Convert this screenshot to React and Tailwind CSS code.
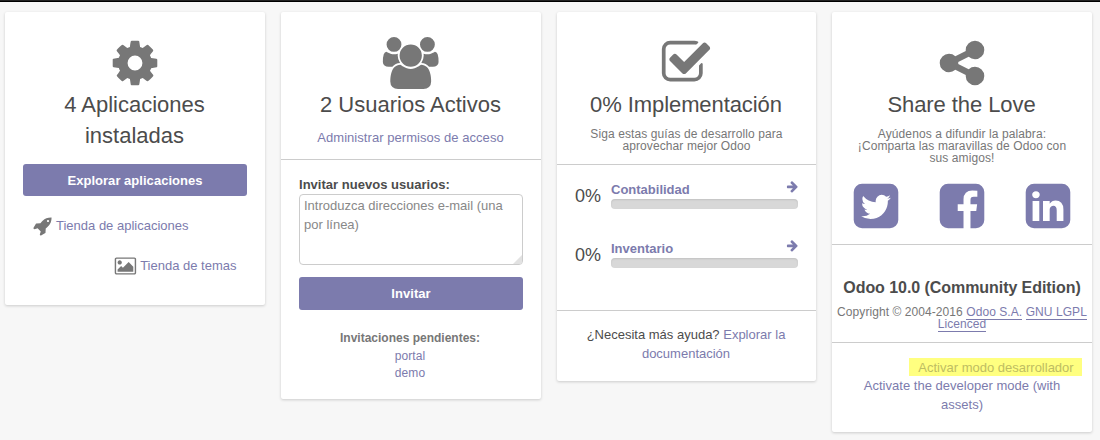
const ICONS = {
  cog: "M1152 896q0-106-75-181t-181-75-181 75-75 181 75 181 181 75 181-75 75-181zm512-109v222q0 12-8 23t-20 13l-185 28q-19 54-39 91 35 50 107 138 10 12 10 25t-9 23q-27 37-99 108t-94 71q-12 0-26-9l-138-108q-44 23-91 38-16 136-29 186-7 28-36 28h-222q-14 0-24.5-8.5t-11.5-21.5l-28-184q-49-16-90-37l-141 107q-10 9-25 9-14 0-25-11-126-114-165-168-7-10-7-23 0-12 8-23 15-21 51-66.5t54-70.5q-27-50-41-99l-183-27q-13-2-21-12.5t-8-23.5v-222q0-12 8-23t19-13l186-28q14-46 39-92-40-57-107-138-10-12-10-24 0-10 9-23 26-36 98.5-107.5t94.5-71.5q13 0 26 10l138 107q44-23 91-38 16-136 29-186 7-28 36-28h222q14 0 24.5 8.5t11.5 21.5l28 184q49 16 90 37l142-107q9-9 24-9 13 0 25 10 129 119 165 170 7 8 7 22 0 12-8 23-15 21-51 66.5t-54 70.5q26 50 41 98l183 28q13 2 21 12.5t8 23.5z",
  users: "M657 896q-162 5-265 128h-134q-82 0-138-40.5t-56-118.5q0-353 124-353 6 0 43.5 21t97.5 42.5 119 21.5q67 0 133-23-5 37-5 66 0 139 81 256zm1071 637q0 120-73 189.5t-194 69.5h-874q-121 0-194-69.5t-73-189.5q0-53 3.5-103.5t14-109 26.5-108.5 43-97.5 62-81 85.5-53.5 111.5-20q10 0 43 21.5t73 48 107 48 135 21.5 135-21.5 107-48 73-48 43-21.5q61 0 111.5 20t85.5 53.5 62 81 43 97.5 26.5 108.5 14 109 3.5 103.5zm-1024-1277q0 106-75 181t-181 75-181-75-75-181 75-181 181-75 181 75 75 181zm704 384q0 159-112.5 271.5t-271.5 112.5-271.5-112.5-112.5-271.5 112.5-271.5 271.5-112.5 271.5 112.5 112.5 271.5zm576 225q0 78-56 118.5t-138 40.5h-134q-103-123-265-128 81-117 81-256 0-29-5-66 66 23 133 23 59 0 119-21.5t97.5-42.5 43.5-21q124 0 124 353zm-128-609q0 106-75 181t-181 75-181-75-75-181 75-181 181-75 181 75 75 181z",
  check: "M1472 930v318q0 119-84.5 203.5t-203.5 84.5h-832q-119 0-203.5-84.5t-84.5-203.5v-832q0-119 84.5-203.5t203.5-84.5h832q63 0 117 25 15 7 18 23 3 17-9 29l-49 49q-10 10-23 10-3 0-9-2-23-6-45-6h-832q-66 0-113 47t-47 113v832q0 66 47 113t113 47h832q66 0 113-47t47-113v-254q0-13 9-22l64-64q10-10 23-10 6 0 12 3 20 8 20 29zm231-489l-814 814q-24 24-57 24t-57-24l-430-430q-24-24-24-57t24-57l110-110q24-24 57-24t57 24l263 263 647-647q24-24 57-24t57 24l110 110q24 24 24 57t-24 57z",
  share: "M1344 1024q133 0 226.5 93.5t93.5 226.5-93.5 226.5-226.5 93.5-226.5-93.5-93.5-226.5q0-12 2-34l-360-180q-92 86-218 86-133 0-226.5-93.5t-93.5-226.5 93.5-226.5 226.5-93.5q126 0 218 86l360-180q-2-22-2-34 0-133 93.5-226.5t226.5-93.5 226.5 93.5 93.5 226.5-93.5 226.5-226.5 93.5q-126 0-218-86l-360 180q2 22 2 34t-2 34l360 180q92-86 218-86z",
  rocket: "M1440 448q0-40-28-68t-68-28-68 28-28 68 28 68 68 28 68-28 28-68zm224-288q0 249-75.5 430.5t-253.5 360.5q-81 80-195 176l-20 379q-2 16-16 26l-384 224q-7 4-16 4-12 0-23-9l-64-64q-13-14-8-32l85-276-281-281-276 85q-3 1-9 1-14 0-23-9l-64-64q-17-19-5-39l224-384q10-14 26-16l379-20q96-114 176-195 188-187 358-258t431-71q14 0 24 9.5t10 22.5z",
  picture: "M704 576q0 80-56 136t-136 56-136-56-56-136 56-136 136-56 136 56 56 136zm1024 384v448h-1408v-192l320-320 160 160 512-512zm96-704h-1600q-13 0-22.5 9.5t-9.5 22.5v1216q0 13 9.5 22.5t22.5 9.5h1600q13 0 22.5-9.5t9.5-22.5v-1216q0-13-9.5-22.5t-22.5-9.5zm160 32v1216q0 66-47 113t-113 47h-1600q-66 0-113-47t-47-113v-1216q0-66 47-113t113-47h1600q66 0 113 47t47 113z",
  arrow: "M1600 960q0 54-37 91l-651 651q-39 37-91 37-51 0-90-37l-75-75q-38-38-38-91t38-91l293-293h-704q-52 0-84.5-37.5t-32.5-90.5v-128q0-53 32.5-90.5t84.5-37.5h704l-293-294q-38-36-38-90t38-90l75-75q38-38 90-38 53 0 91 38l651 651q37 35 37 90z",
  twitter: "M1408 610q-56 25-121 34 68-40 93-117-65 38-134 51-61-66-153-66-87 0-148.5 61.5t-61.5 148.5q0 29 5 48-129-7-242-65t-192-155q-29 50-29 106 0 114 91 175-47-1-100-26v2q0 75 50 133.5t123 72.5q-29 8-51 8-13 0-39-4 21 63 74.5 104t121.5 42q-116 90-261 90-26 0-50-3 148 94 322 94 112 0 210-35.5t168-95 120.5-137 75-162 24.5-168.5q0-18-1-27 63-45 105-109zm256-194v960q0 119-84.5 203.5t-203.5 84.5h-960q-119 0-203.5-84.5t-84.5-203.5v-960q0-119 84.5-203.5t203.5-84.5h960q119 0 203.5 84.5t84.5 203.5z",
  facebook: "M1376 128q119 0 203.5 84.5t84.5 203.5v960q0 119-84.5 203.5t-203.5 84.5h-188v-595h199l30-232h-229v-148q0-56 23.5-84t91.5-28l122-1v-207q-63-9-178-9-136 0-217.5 80t-81.5 226v171h-200v232h200v595h-532q-119 0-203.5-84.5t-84.5-203.5v-960q0-119 84.5-203.5t203.5-84.5h960z",
  linkedin: "M365 1414h231v-694h-231v694zm246-908q-1-52-36-86t-93-34-94.5 34-36.5 86q0 51 35.5 85.5t92.5 34.5h1q59 0 95-34.5t36-85.5zm585 908h231v-398q0-154-73-233t-193-79q-136 0-209 117h2v-101h-231q3 66 0 694h231v-388q0-38 7-56 15-35 45-59.5t74-24.5q116 0 116 157v371zm468-998v960q0 119-84.5 203.5t-203.5 84.5h-960q-119 0-203.5-84.5t-84.5-203.5v-960q0-119 84.5-203.5t203.5-84.5h960q119 0 203.5 84.5t84.5 203.5z",
};

function Icon({ name, wide = false, className }) {
  return (
    <svg viewBox={wide ? "0 0 2048 1792" : "0 0 1792 1792"} fill="currentColor" className={`block shrink-0 ${className}`}>
      <path d={ICONS[name]} />
    </svg>
  );
}

function Card({ className, children }) {
  return (
    <section className={`shrink-0 rounded-[2px] bg-white shadow-[0_1px_3px_rgba(0,0,0,0.18)] ${className}`}>
      {children}
    </section>
  );
}

function CardHeader({ icon, wide, tracking = "", children }) {
  return (
    <header className="pt-[25px] pr-px text-center">
      <div className="flex h-[52px] justify-center text-[#777]">
        <Icon name={icon} wide={wide} className={`h-[52px] ${wide ? "w-[59.43px]" : "w-[52px]"}`} />
      </div>
      <h2 className={`text-[22px] leading-[31px] whitespace-nowrap ${tracking}`}>{children}</h2>
    </header>
  );
}

function Button({ className, children }) {
  return (
    <button className={`mx-[18px] block w-[224px] rounded-[3px] bg-[#7c7bad] text-center text-[13px] font-bold text-white ${className}`}>
      {children}
    </button>
  );
}

function Progress({ label }) {
  return (
    <div className="flex h-[59px] pl-[18px]">
      <div className="w-9 pt-[5px] text-[18px] leading-[22px]">0%</div>
      <div className="w-[187px]">
        <div className="flex h-[19px] justify-between text-[#7c7bad]">
          <span className="text-[13px] leading-[19px] font-bold">{label}</span>
          <Icon name="arrow" className="-mr-px h-[13px] w-[13px]" />
        </div>
        <div className="h-[10px] rounded-[4px] bg-[#d8d8d8] shadow-[inset_0_1px_2px_rgba(0,0,0,0.1)]" />
      </div>
    </div>
  );
}

export default function App() {
  return (
    <main className="h-[440px] w-[1100px] overflow-hidden bg-[#f7f7f7] font-['Liberation_Sans',Arial,sans-serif] text-[13px] text-[#4c4c4c]">
      <div className="h-[2px] border-b border-black bg-[#222]" />
      <div className="flex items-start gap-4 pt-[10px] pl-[5px]">
        <Card className="h-[293px] w-[260px]">
          <CardHeader icon="cog">
            4 Aplicaciones
            <br />
            instaladas
          </CardHeader>
          <Button className="mt-[13px] h-8 pt-px leading-[31px] tracking-[0.03px]">Explorar aplicaciones</Button>
          <div className="mt-5 flex h-[19px] items-center gap-[3px] pl-[28px] leading-[19px]">
            <Icon name="rocket" className="mt-px h-[20px] w-[20px] text-[#777]" />
            <a className="text-[#7c7bad]">Tienda de aplicaciones</a>
          </div>
          <div className="mt-[21px] flex h-[19px] items-center justify-end gap-[3px] pr-[28.5px] leading-[19px]">
            <Icon name="picture" wide className="mt-px h-[20px] w-[22.86px] text-[#777]" />
            <a className="text-[#7c7bad]">Tienda de temas</a>
          </div>
        </Card>

        <Card className="h-[387px] w-[260px]">
          <CardHeader icon="users" wide>2 Usuarios Activos</CardHeader>
          <div className="h-[40px] border-b border-[#ccc] pt-2 pr-px text-center leading-[19px] tracking-[0.05px] text-[#7c7bad]">Administrar permisos de acceso</div>
          <div className="px-[18px] pt-[15px]">
            <label className="block leading-[19px] font-bold tracking-[0.02px]">Invitar nuevos usuarios:</label>
            <div className="relative">
              <textarea
                className="block h-[71px] w-[224px] resize-none rounded-[4px] border border-[#ccc] bg-white px-1 py-[1px] leading-[19px] placeholder:text-[#888]"
                placeholder="Introduzca direcciones e-mail (una por línea)"
              />
              <svg viewBox="0 0 9 9" className="absolute right-px bottom-px h-[9px] w-[9px]">
                <path d="M9 0v7q0 2-2 2H0z" fill="#e2e2e2" />
              </svg>
            </div>
          </div>
          <Button className="mt-3 h-[33px] leading-[33px] tracking-[0.05px]">Invitar</Button>
          <div className="pt-[19px] pr-[2px] text-center text-[12px] leading-[18px] text-[#7c7bad]">
            <div className="font-bold text-[#777]">Invitaciones pendientes:</div>
            <div className="tracking-[0.1px]">portal</div>
            <div className="-mt-px tracking-[0.1px]">demo</div>
          </div>
        </Card>

        <Card className="h-[369px] w-[259px]">
          <CardHeader icon="check" tracking="tracking-[-0.08px]">0% Implementación</CardHeader>
          <div className="h-[45px] border-b border-[#ccc] pt-2 text-center text-[12px] leading-3 tracking-[0.1px] text-[#777]">
            Siga estas guías de desarrollo para
            <br />
            aprovechar mejor Odoo
          </div>
          <div className="h-[146px] border-b border-[#ccc] pt-[15px]">
            <Progress label="Contabilidad" />
            <Progress label="Inventario" />
          </div>
          <p className="pt-[14px] pr-px text-center leading-[19px]">
            ¿Necesita más ayuda? <a className="text-[#7c7bad]">Explorar la<br />documentación</a>
          </p>
        </Card>

        <Card className="h-[420px] w-[260px]">
          <CardHeader icon="share" tracking="tracking-[-0.08px]">Share the Love</CardHeader>
          <div className="pt-2 text-center text-[12px] leading-3 tracking-[0.1px] text-[#777]">
            Ayúdenos a difundir la palabra:
            <br />
            ¡Comparta las maravillas de Odoo con
            <br />
            sus amigos!
          </div>
          <div className="flex h-[81px] justify-between border-b border-[#ccc] pr-[18.5px] pl-[18px] pt-[16px] text-[#7c7bad]">
            <Icon name="twitter" className="h-[52px] w-[52px]" />
            <Icon name="facebook" className="h-[52px] w-[52px]" />
            <Icon name="linkedin" className="h-[52px] w-[52px]" />
          </div>
          <div className="h-[98px] border-b border-[#ccc] pt-8 text-center">
            <h3 className="text-[16px] leading-[22px] font-bold tracking-[-0.06px] whitespace-nowrap">Odoo 10.0 (Community Edition)</h3>
            <div className="mt-[7px] text-[12px] leading-3 tracking-[0.07px] whitespace-nowrap text-[#777]">
              Copyright © 2004-2016 <a className="border-b border-[#7c7bad] text-[#7c7bad]">Odoo S.A.</a>{" "}
              <a className="border-b border-[#7c7bad] text-[#7c7bad]">GNU LGPL<br />Licenced</a>
            </div>
          </div>
          <div className="pt-[15px] text-center leading-[19px] text-[#7c7bad]">
            <div className="ml-[77px] h-[18px] w-[173px] bg-[#ffff80] pl-px leading-[19px] text-[#bebd62]">Activar modo desarrollador</div>
            <div className="tracking-[0.02px]">
              Activate the developer mode (with
              <br />
              assets)
            </div>
          </div>
        </Card>
      </div>
    </main>
  );
}
